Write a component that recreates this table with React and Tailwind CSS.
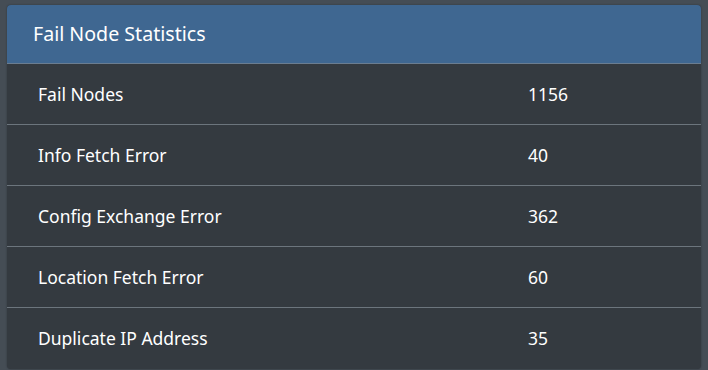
const rows = [
  { label: "Fail Nodes", value: 1156 },
  { label: "Info Fetch Error", value: 40 },
  { label: "Config Exchange Error", value: 362 },
  { label: "Location Fetch Error", value: 60 },
  { label: "Duplicate IP Address", value: 35 },
];

export default function App() {
  return (
    <div
      className="w-[708px] h-[370px] bg-[#454d55] pt-[5px] pl-[7px]"
      style={{ fontFamily: "'Noto Sans', 'Open Sans', sans-serif" }}
    >
      <div className="w-[694px] rounded-[4px] overflow-hidden bg-[#343a40] shadow-[0_0_2px_rgba(0,0,0,0.35)]">
        <div className="h-[59px] bg-[#3f6791] border-b border-[#6b7d90] flex items-center px-[26px]">
          <h3 className="text-[19.6px] text-white">Fail Node Statistics</h3>
        </div>
        {rows.map((row, i) => (
          <div
            key={row.label}
            className={`h-[61px] flex items-center text-[17.5px] text-white ${
              i < rows.length - 1 ? "border-b border-[#6c757d]" : ""
            }`}
          >
            <div className="w-[490px] pl-[31px]">{row.label}</div>
            <div className="pl-[31px]">{row.value}</div>
          </div>
        ))}
      </div>
    </div>
  );
}
